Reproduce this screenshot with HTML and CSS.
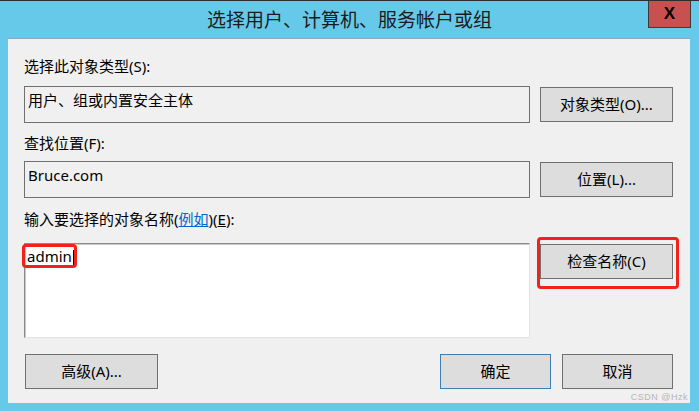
FILE: index.html
```html
<!DOCTYPE html>
<html lang="zh-CN">
<head>
<meta charset="utf-8">
<title>选择用户、计算机、服务帐户或组</title>
<link rel="stylesheet" href="styles.css">
</head>
<body>
<div class="window">
  <div class="titlebar">
    <div class="title">选择用户、计算机、服务帐户或组</div>
    <div class="close">X</div>
  </div>
  <div class="panel">
    <div class="label">选择此对象类型(S):</div>
    <div class="row row-1">
      <div class="field">用户、组或内置安全主体</div>
      <div class="btn">对象类型(O)...</div>
    </div>
    <div class="label label-2">查找位置(F):</div>
    <div class="row row-2">
      <div class="field">Bruce.com</div>
      <div class="btn">位置(L)...</div>
    </div>
    <div class="label label-3">输入要选择的对象名称(<span class="link">例如</span>)(<span class="ul">E</span>):</div>
    <div class="row row-3">
      <div class="field field-input">admin<span class="caret"></span><span class="mark mark-text"></span></div>
      <div class="annot">
        <div class="btn">检查名称(C)</div>
        <span class="mark mark-btn"></span>
      </div>
    </div>
    <div class="bottom">
      <div class="btn btn-adv">高级(A)...</div>
      <div class="btn btn-small btn-default">确定</div>
      <div class="btn btn-small">取消</div>
    </div>
    <div class="watermark">CSDN @Hzk</div>
  </div>
</div>
</body>
</html>
```
FILE: styles.css
```css
html, body {
  margin: 0;
  padding: 0;
}
body {
  width: 699px;
  height: 411px;
  overflow: hidden;
  background: #66c9ea;
  font-family: "Noto Sans", "Noto Sans CJK SC", sans-serif;
  color: #000;
}
.window {
  width: 699px;
  height: 411px;
  box-sizing: border-box;
  border-top: 1px solid #2d2d2d;
}
.titlebar {
  height: 37px;
  display: grid;
  grid-template-columns: 1fr auto 1fr;
  align-items: start;
}
.title {
  grid-column: 2;
  font-family: "Noto Sans CJK SC", sans-serif;
  font-size: 19px;
  line-height: 35px;
  color: #1b1b1b;
  white-space: nowrap;
}
.close {
  grid-column: 3;
  justify-self: end;
  margin-top: -1px;
  margin-right: 8px;
  width: 43px;
  height: 28px;
  box-sizing: border-box;
  border: 1px solid #3b3b3b;
  border-top-color: #2d2d2d;
  background: #c75050;
  color: #000;
  font-family: "Liberation Sans", sans-serif;
  font-weight: bold;
  font-size: 17px;
  line-height: 25px;
  text-align: center;
}
.panel {
  position: relative;
  margin-left: 8px;
  width: 682px;
  height: 365px;
  box-sizing: border-box;
  border-top: 1px solid #93a9b5;
  background: #f0f0f0;
  padding: 17px 17px 0 16px;
  display: flex;
  flex-direction: column;
  font-size: 15px;
}
.label {
  height: 20px;
  line-height: 20px;
  white-space: nowrap;
}
.label-2 { margin-top: 10px; }
.label-3 { margin-top: 11px; }
.link {
  color: #0066cc;
  text-decoration: underline;
}
.ul { text-decoration: underline; }
.row {
  display: flex;
  gap: 10px;
  align-items: flex-start;
}
.row-1 { margin-top: 10px; }
.row-2 { margin-top: 8px; }
.row-3 { margin-top: 14px; }
.field {
  width: 506px;
  height: 37px;
  box-sizing: border-box;
  border: 1px solid #707070;
  padding: 3px 3px 0 3px;
  line-height: 20px;
  white-space: nowrap;
}
.field-input {
  position: relative;
  height: 95px;
  background: #fff;
  border-color: #8a8a8a #e3e3e3 #e3e3e3 #8a8a8a;
  box-shadow: inset 1px 1px 0 #c8c8c8;
  padding: 2px 2px 0 2px;
}
.caret {
  display: inline-block;
  width: 1px;
  height: 16px;
  background: #000;
  margin-left: 1px;
  vertical-align: -4px;
}
.btn {
  width: 133px;
  height: 35px;
  margin-top: 1px;
  box-sizing: border-box;
  border: 1px solid #707070;
  background: #dddddd;
  text-align: center;
  line-height: 32px;
  white-space: nowrap;
}
.annot {
  position: relative;
}
.mark {
  position: absolute;
  box-sizing: border-box;
  border: 3px solid #f3201c;
  border-radius: 4px;
}
.mark-text {
  left: -3px;
  top: 0;
  width: 55px;
  height: 24px;
}
.mark-btn {
  left: -3px;
  top: -6px;
  width: 142px;
  height: 52px;
}
.bottom {
  margin-top: 15px;
  display: flex;
  gap: 11px;
}
.btn-adv {
  margin-left: 1px;
  margin-right: auto;
}
.btn-small {
  width: 111px;
}
.btn-default {
  border-color: #3c7fb1;
}
.watermark {
  position: absolute;
  right: 2px;
  bottom: 1px;
  font-family: "Liberation Sans", sans-serif;
  font-size: 9px;
  color: #b4b4b4;
  letter-spacing: 0.5px;
}
```
